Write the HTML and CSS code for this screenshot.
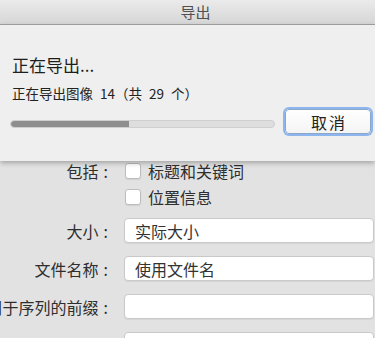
FILE: index.html
```html
<!DOCTYPE html>
<html lang="zh-cn">
<head>
  <meta charset="UTF-8">
  <title>导出</title>
  <meta name="viewport" content="width=device-width, initial-scale=1">
  <link rel="stylesheet" href="styles.css">
</head>
<body>
  <div class="titlebar">导出</div>
  <div class="sheet">
    <div class="headline">正在导出...</div>
    <div class="detail">正在导出图像 14（共 29 个）</div>
    <div class="progress-row">
      <div class="track"><div class="fill" style="width:45%"></div></div>
      <button class="button">取消</button>
    </div>
  </div>
  <div class="form">
    <div class="row check">
      <div class="label">包括<span class="colon">:</span></div>
      <span class="box"></span><span class="opt">标题和关键词</span>
    </div>
    <div class="row check">
      <div class="label"></div>
      <span class="box"></span><span class="opt">位置信息</span>
    </div>
    <div class="row field">
      <div class="label">大小<span class="colon">:</span></div>
      <div class="input">实际大小</div>
    </div>
    <div class="row field">
      <div class="label">文件名称<span class="colon">:</span></div>
      <div class="input">使用文件名</div>
    </div>
    <div class="row field">
      <div class="label">用于序列的前缀<span class="colon">:</span></div>
      <div class="input"></div>
    </div>
    <div class="row field">
      <div class="label">子文件夹格式<span class="colon">:</span></div>
      <div class="input">无</div>
    </div>
  </div>
</body>
</html>
```

FILE: styles.css
```css
body { margin:0; padding:0; width:375px; height:338px; overflow:hidden; background:#e2e2e2; font-family:"Noto Sans CJK SC", "Noto Sans", sans-serif; color:#2b2b2b; }
.titlebar { height:25px; line-height:24px; box-sizing:border-box; padding-left:16px; text-align:center; font-size:15px; color:#505050; background:linear-gradient(#ebebeb, #d6d6d6); border-bottom:1px solid #a3a3a3; }
.sheet { position:relative; z-index:1; height:136px; box-sizing:border-box; padding:29px 0 0 10px; background:#efefef; box-shadow:0 2px 5px rgba(0,0,0,.28); }
.headline { font-size:17px; line-height:22px; margin-left:2px; color:#1e1e1e; }
.detail { font-size:13.5px; line-height:18px; margin-top:8px; margin-left:2px; word-spacing:4px; color:#222; }
.progress-row { display:flex; align-items:flex-start; margin-top:5px; }
.track { width:265px; height:8px; margin-top:13px; background:#dedede; border:1px solid #cfcfcf; border-radius:5px; box-sizing:border-box; overflow:hidden; }
.fill { height:100%; background:#8e8e8e; border-radius:4px 0 0 4px; }
.button { width:86px; height:25px; margin:2px 0 0 10px; padding:0 0 0 2px; font-family:inherit; font-size:16px; letter-spacing:2px; color:#222; background:linear-gradient(#ffffff, #f4f4f4); border:1px solid #8aa6c8; border-radius:4px; box-shadow:0 0 0 2px #8db6ee; }
.form { display:flex; flex-direction:column; }
.row { display:flex; align-items:center; }
.row.check { height:20px; }
.check + .check { margin-top:6px; }
.row.field { height:25px; margin-top:13px; }
.check + .field { margin-top:11px; }
.label { width:108px; flex-shrink:0; display:flex; justify-content:flex-end; white-space:nowrap; font-size:16px; color:#2e2e2e; margin-right:16px; }
.colon { margin-left:5px; }
.box { width:16px; height:16px; margin-left:1px; background:#fff; border:1px solid #bdbdbd; border-radius:3px; box-sizing:border-box; box-shadow:0 1px 1px rgba(0,0,0,.08); }
.opt { font-size:16px; margin-left:7px; color:#2e2e2e; }
.input { flex:1; height:25px; line-height:25px; margin-right:1px; padding-left:10px; font-size:16px; color:#333; background:#fff; border:1px solid #c9c9c9; border-radius:4px; box-sizing:border-box; box-shadow:0 1px 1px rgba(0,0,0,.06); }
```
